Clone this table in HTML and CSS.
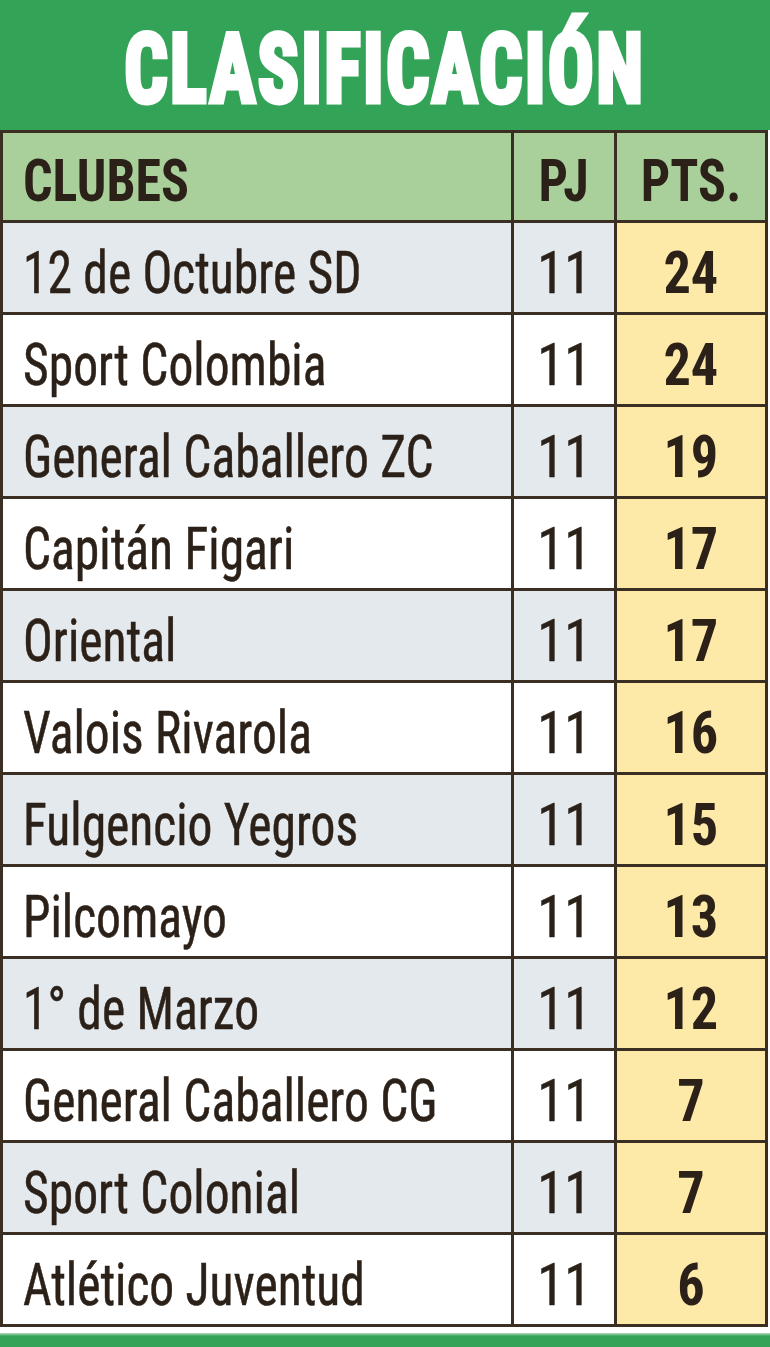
FILE: index.html
```html
<!DOCTYPE html>
<html lang="es">
<head>
<meta charset="utf-8">
<title>Clasificación</title>
<link rel="stylesheet" href="styles.css">
</head>
<body>
<div class="page">
  <header class="title-bar"><h1 class="title"><span class="title-text">CLASIFICACIÓN</span></h1></header>
  <table class="standings">
    <colgroup><col class="c-club"><col class="c-pj"><col class="c-pts"></colgroup>
    <thead>
      <tr><th class="club"><span class="t">CLUBES</span></th><th class="num"><span class="t">PJ</span></th><th class="num"><span class="t">PTS.</span></th></tr>
    </thead>
    <tbody>
      <tr><td class="club"><span class="t">12 de Octubre SD</span></td><td class="pj"><span class="t">11</span></td><td class="pts"><span class="t">24</span></td></tr>
      <tr><td class="club"><span class="t">Sport Colombia</span></td><td class="pj"><span class="t">11</span></td><td class="pts"><span class="t">24</span></td></tr>
      <tr><td class="club"><span class="t">General Caballero ZC</span></td><td class="pj"><span class="t">11</span></td><td class="pts"><span class="t">19</span></td></tr>
      <tr><td class="club"><span class="t">Capitán Figari</span></td><td class="pj"><span class="t">11</span></td><td class="pts"><span class="t">17</span></td></tr>
      <tr><td class="club"><span class="t">Oriental</span></td><td class="pj"><span class="t">11</span></td><td class="pts"><span class="t">17</span></td></tr>
      <tr><td class="club"><span class="t">Valois Rivarola</span></td><td class="pj"><span class="t">11</span></td><td class="pts"><span class="t">16</span></td></tr>
      <tr><td class="club"><span class="t">Fulgencio Yegros</span></td><td class="pj"><span class="t">11</span></td><td class="pts"><span class="t">15</span></td></tr>
      <tr><td class="club"><span class="t">Pilcomayo</span></td><td class="pj"><span class="t">11</span></td><td class="pts"><span class="t">13</span></td></tr>
      <tr><td class="club"><span class="t">1° de Marzo</span></td><td class="pj"><span class="t">11</span></td><td class="pts"><span class="t">12</span></td></tr>
      <tr><td class="club"><span class="t">General Caballero CG</span></td><td class="pj"><span class="t">11</span></td><td class="pts"><span class="t">7</span></td></tr>
      <tr><td class="club"><span class="t">Sport Colonial</span></td><td class="pj"><span class="t">11</span></td><td class="pts"><span class="t">7</span></td></tr>
      <tr><td class="club"><span class="t">Atlético Juventud</span></td><td class="pj"><span class="t">11</span></td><td class="pts"><span class="t">6</span></td></tr>
    </tbody>
  </table>
  <div class="bottom-bar"></div>
</div>
</body>
</html>
```
FILE: styles.css
```css
html, body {
  margin: 0;
  padding: 0;
  background: #ffffff;
}
.page {
  width: 770px;
  font-family: "Roboto Condensed", "Liberation Sans", Arial, sans-serif;
  color: #2b2118;
}
.title-bar {
  height: 130px;
  background: #33a457;
  display: flex;
  align-items: center;
  justify-content: center;
}
.title {
  margin: 0;
  padding-top: 8px;
  font-size: 96px;
  line-height: 1;
  font-weight: 700;
  color: #ffffff;
  white-space: nowrap;
}
.title-text {
  display: inline-block;
  letter-spacing: 3px;
  -webkit-text-stroke: 5px #ffffff;
  transform: scaleX(0.795);
  transform-origin: center center;
}
.standings {
  width: 768px;
  table-layout: fixed;
  border-collapse: separate;
  border-spacing: 3px;
  background: #3b2e22;
}
.c-club { width: 508px; }
.c-pj { width: 100px; }
.c-pts { width: 148px; }
.standings th,
.standings td {
  padding: 0;
  font-size: 59px;
  line-height: 1;
  white-space: nowrap;
  vertical-align: middle;
}
.standings .t {
  display: inline-block;
  transform-origin: center center;
}
.standings thead th {
  height: 80px;
  padding-top: 7px;
  background: #a9d09b;
  font-weight: 700;
}
.standings thead .t {
  transform: scaleX(0.88);
}
.standings tbody td {
  height: 80px;
  padding-top: 9px;
  font-weight: 400;
  -webkit-text-stroke: 0.5px #2b2118;
}
.standings tbody tr:nth-child(odd) td { background: #e4e9ee; }
.standings tbody tr:nth-child(even) td { background: #ffffff; }
.standings tbody tr td.pts {
  background: #fde9a8;
  font-weight: 700;
  -webkit-text-stroke: 0;
}
.standings tbody td .t {
  transform: scaleX(0.92);
}
.standings th.club,
.standings td.club {
  text-align: left;
  padding-left: 20px;
}
.standings tbody td.club .t {
  transform: scaleX(0.84);
  transform-origin: left center;
}
.standings thead th.club .t {
  transform-origin: left center;
}
.standings th.num,
.standings td.pj,
.standings td.pts {
  text-align: center;
}
.bottom-bar {
  margin-top: 6px;
  height: 14px;
  background: linear-gradient(#b9dfc3 0, #33a457 3px, #33a457 100%);
}
```
